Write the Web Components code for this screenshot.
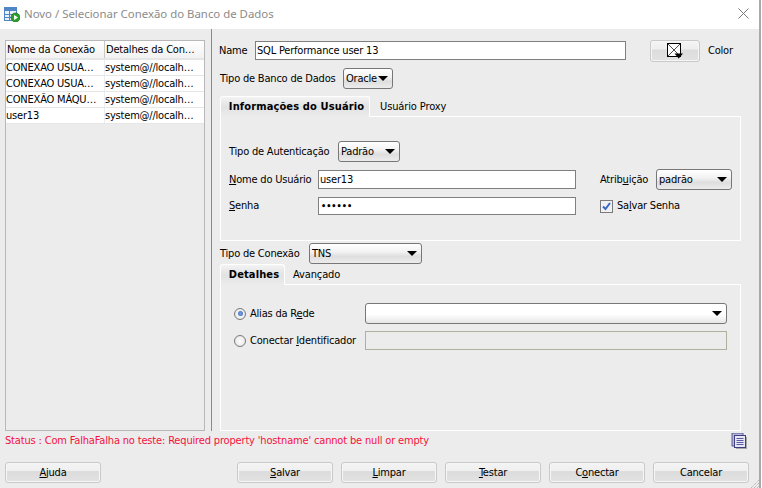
<!DOCTYPE html>
<html><head><meta charset="utf-8">
<style>
html,body{margin:0;padding:0;background:#fff}
body{font:11px/14px "DejaVu Sans Condensed","DejaVu Sans",sans-serif;font-stretch:condensed;letter-spacing:-.2px;color:#000;white-space:nowrap}
</style></head><body>
<conn-dialog></conn-dialog>
<script>
function el(name, css, html){
  customElements.define(name, class extends HTMLElement{
    constructor(){super();const r=this.attachShadow({mode:'open'});r.innerHTML='<style>'+css+'</style>'+html(this);}
  });
}
const arrow='<svg width="10" height="5" viewBox="0 0 10 5"><path d="M0 0H10L5 5Z" fill="#000"/></svg>';
el('x-btn',`:host{display:flex;align-items:center;justify-content:center;box-sizing:border-box;height:21px;width:96px;border:1px solid #c9c9c9;border-radius:3px;background:linear-gradient(#f4f4f4 0,#efefef 40%,#dcdcdc 45%,#e2e2e2 100%);box-shadow:inset 0 0 0 1px #f6f6f6}`,()=>'<slot></slot>');
el('x-select',`:host{display:flex;align-items:center;box-sizing:border-box;height:21px;border:1px solid #777;border-radius:3px;background:linear-gradient(#fff 0,#f3f3f3 40%,#dedede 65%,#ececec 100%);padding:1px 4px 0 2px;justify-content:space-between}
:host([plain]){background:linear-gradient(#fff 0,#fff 55%,#e6e6e6 100%)}svg{flex:none;margin-top:-2px}`,()=>'<span><slot></slot></span>'+arrow);
el('x-input',`:host{display:flex;align-items:center;box-sizing:border-box;height:19px;border:1px solid #7f7f7f;background:#fff;padding:0 1px}
:host([disabled]){background:#ececec;border-color:#b0b0a0}`,()=>'<slot></slot>');
el('x-tabs',`:host{display:block}
.bar{display:flex;height:21px;align-items:stretch}
.panel{box-sizing:border-box;border:1px solid #fff;margin-top:-1px;background:#ececec}
.on{box-sizing:border-box;display:flex;align-items:center;justify-content:center;padding-left:3px;border:1px solid #fff;border-bottom:0;border-radius:3px 3px 0 0;background:linear-gradient(#f3f3f3 0,#e2e2e2 50%,#ececec 100%);font-weight:700;letter-spacing:.13px;position:relative;z-index:1}
.off{display:flex;align-items:center;letter-spacing:-.12px}`,h=>`<div class="bar"><div class="on" style="width:${h.getAttribute('w1')}px">${h.getAttribute('t1')}</div><div class="off" style="margin-left:${h.getAttribute('g')}px">${h.getAttribute('t2')}</div></div><div class="panel" style="height:${h.getAttribute('h')}px"><slot></slot></div>`);
el('x-row',`:host{display:flex;align-items:center}`,()=>'<slot></slot>');
el('conn-table',`:host{display:block;box-sizing:border-box;width:200px;height:391px;border:1px solid #b8b8b8;background:#ececec}
.r{display:grid;grid-template-columns:98px 1fr;height:16px;box-sizing:border-box;border-bottom:1px solid #e6e6e6;background:#fff;white-space:nowrap;align-items:center}
.r span{overflow:hidden}.r span+span{border-left:1px solid #ececec;height:15px;line-height:15px}
.h{height:19px;background:linear-gradient(#fff,#f2f2f2);border-bottom:2px solid #e6e6e6}
.h span{padding-left:1px}.h span+span{border-left:1px solid #c8c8c8;height:17px;line-height:17px;padding-left:1px}`,()=>{
  const rows=[['CONEXAO USUA…','system@//localh…'],['CONEXAO USUA…','system@//localh…'],['CONEXÃO MÁQU…','system@//localh…'],['user13','system@//localh…']];
  return `<div class="r h"><span>Nome da Conexão</span><span>Detalhes da Con…</span></div>`+rows.map(r=>`<div class="r"><span>${r[0]}</span><span>${r[1]}</span></div>`).join('');
});
el('conn-dialog',`:host{display:flex;flex-direction:column;position:relative;width:759px;height:488px;box-sizing:content-box;border-right:2px solid #a9a9a9;background:#ececec;overflow:hidden}
.title{height:29px;flex:none;background:#fff;display:flex;align-items:center;color:#8b8b8b;padding:0 10px 2px 4px;box-sizing:border-box;justify-content:space-between;font:11.4px/14px "Noto Sans",sans-serif;letter-spacing:0}
.title>span{display:flex;align-items:center;gap:4px}
.main{flex:none;height:402px;display:flex;padding-left:5px}
.left{padding-top:11px;flex:none}
.split{flex:none;width:1px;height:402px;margin:0 8px 0 6px;background:#8a8a8a}
.right{flex:none;width:521px}
.name{height:19px;margin-top:12px}
.status{height:31px;flex:none;display:flex;align-items:flex-start;justify-content:space-between;color:#f5113c;letter-spacing:-.165px;padding:2px 12px 0 5px;box-sizing:border-box}
.status span{margin-top:1px}
.btns{display:flex;padding:0 10px 0 5px;gap:8px}
u{text-underline-offset:1px}
.auth{margin:24px 0 0 8px}
.user{margin:7px 0 0 8px}
.pw{margin:7px 0 0 8px}
.net{margin:18px 0 0 13px}
.cid{margin:7px 0 0 13px}
.radio{width:12px;height:12px;border-radius:50%;border:1px solid #7a7a7a;background:radial-gradient(#fff,#e0e0e0);box-sizing:border-box;flex:none;display:flex;align-items:center;justify-content:center;margin-right:4px}
.radio i{width:5px;height:5px;border-radius:50%;background:radial-gradient(#7da2e6,#3a62b8)}
.check{width:13px;height:13px;box-sizing:border-box;border:1px solid #7b7b7b;background:#f0f0f5;flex:none;margin-right:4px;display:flex;align-items:center;justify-content:center}
.grip{position:absolute;right:0;bottom:0}
`,()=>`
<div class="title"><span>
<svg width="16" height="16" viewBox="0 0 16 16"><rect x=".5" y="1.5" width="12" height="13" fill="#eaf1fa" stroke="#4f86c6"/><rect x="1" y="2" width="11" height="3" fill="#4f86c6"/><path d="M1 8.5H12M1 11.5H12M5.5 5V14" stroke="#4f86c6"/><circle cx="11.5" cy="11.5" r="4.5" fill="#2aa02a" stroke="#17701b" stroke-width=".7"/><path d="M10 9L14 11.5L10 14Z" fill="#fff"/></svg>
Novo / Selecionar Conexão do Banco de Dados</span>
<svg width="11" height="11" viewBox="0 0 11 11"><path d="M.5 .5L10.5 10.5M10.5 .5L.5 10.5" stroke="#7a7a7a" fill="none"/></svg></div>
<div class="main">
 <div class="left"><conn-table></conn-table></div>
 <div class="split"></div>
 <div class="right">
  <x-row class="name"><span style="width:35px;margin-left:-1px;padding-right:1px">Name</span><x-input style="width:371px">SQL Performance user 13</x-input>
   <x-btn style="width:50px;height:22px;margin:0 8px 0 24px"><svg width="16" height="16" viewBox="0 0 16 16"><rect x=".5" y=".5" width="13" height="13" fill="#fff" stroke="#000"/><path d="M1 1L13 13M13 1L1 13" stroke="#000" stroke-width=".7"/><path d="M7.5 10.5H16L11.75 15.5Z" fill="#000"/></svg></x-btn><span>Color</span></x-row>
  <x-row style="margin-top:8px;height:21px"><span style="width:123px">Tipo de Banco de Dados</span><x-select style="width:50px">Oracle</x-select></x-row>
  <x-tabs style="margin-top:7px" t1="Informações do Usuário" t2="Usuário Proxy" w1="150" g="10" h="125">
   <x-row class="auth"><span style="width:109px">Tipo de Autenticação</span><x-select style="width:62px">Padrão</x-select></x-row>
   <x-row class="user"><span style="width:89px"><u>N</u>ome do Usuário</span><x-input style="width:258px">user13</x-input><span style="margin-left:24px;width:56px">Atrib<u>u</u>ição</span><x-select style="width:76px">padrão</x-select></x-row>
   <x-row class="pw"><span style="width:89px"><u>S</u>enha</span><x-input style="width:258px;height:18px"><b style="letter-spacing:0;font-size:9px;padding-left:1px">••••••</b></x-input><span class="check" style="margin-left:24px"><svg width="9" height="9" viewBox="0 0 9 9"><path d="M1 4.5L3.5 7L8 1" stroke="#3a66c4" stroke-width="2" fill="none"/></svg></span><span>Sa<u>l</u>var Senha</span></x-row>
  </x-tabs>
  <x-row style="height:21px;margin-top:2px"><span style="width:89px">Tipo de Conexão</span><x-select style="width:113px">TNS</x-select></x-row>
  <x-tabs t1="Detalhes" t2="Avançado" w1="65" g="8" h="147">
   <x-row class="net"><span class="radio"><i></i></span><span style="width:115px">Alias da R<u>e</u>de</span><x-select plain style="width:362px"></x-select></x-row>
   <x-row class="cid"><span class="radio"></span><span style="width:115px">Conectar <u>I</u>dentificador</span><x-input disabled style="width:362px"></x-input></x-row>
  </x-tabs>
 </div>
</div>
<div class="status"><span>Status : Com FalhaFalha no teste: Required property 'hostname' cannot be null or empty</span>
<svg width="16" height="16" viewBox="0 0 16 16"><rect x="1" y="0" width="11" height="13" fill="#b8b8dd" stroke="#3f3f80" stroke-width=".8"/><rect x="5" y="4" width="11" height="12" fill="#a8a8a8"/><rect x="3.5" y="2.5" width="11" height="12" fill="#e6e6f4" stroke="#3f3f80"/><path d="M5.5 5.5H12.5M5.5 7.5H12.5M5.5 9.5H12.5M5.5 11.5H12.5" stroke="#5a5aa0"/></svg></div>
<div class="btns">
 <x-btn style="margin-right:128px"><span><u>A</u>juda</span></x-btn>
 <x-btn><span><u>S</u>alvar</span></x-btn><x-btn><span><u>L</u>impar</span></x-btn><x-btn><span><u>T</u>estar</span></x-btn><x-btn><span>C<u>o</u>nectar</span></x-btn><x-btn>Cancelar</x-btn>
</div>
<svg class="grip" width="8" height="8" viewBox="0 0 8 8"><path d="M0 8L8 0M3 8L8 3M6 8L8 6" stroke="#a8a8a8" stroke-dasharray="1 1"/></svg>`);
</script>
</body></html>
